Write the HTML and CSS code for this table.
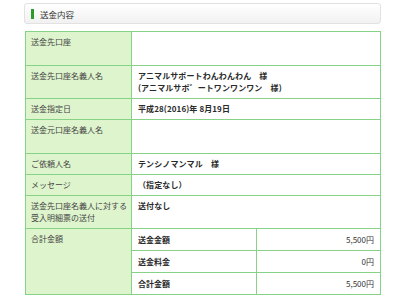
FILE: index.html
```html
<!DOCTYPE html>
<html lang="ja">
<head>
<meta charset="utf-8">
<link rel="stylesheet" href="styles.css">
</head>
<body>
<div class="page">
  <div class="heading"><span class="mark"></span><span class="heading-text">送金内容</span></div>
  <table class="detail">
    <colgroup><col class="c-label"><col class="c-value"></colgroup>
    <tr class="tall"><th>送金先口座</th><td></td></tr>
    <tr><th>送金先口座名義人名</th><td class="strong">アニマルサポートわんわんわん　様<br>(アニマルサポ゛ートワンワンワン　様)</td></tr>
    <tr><th>送金指定日</th><td class="strong">平成28(2016)年 8月19日</td></tr>
    <tr class="tall"><th>送金元口座名義人名</th><td></td></tr>
    <tr><th>ご依頼人名</th><td class="strong">テンシノマンマル　様</td></tr>
    <tr><th>メッセージ</th><td class="strong">（指定なし）</td></tr>
    <tr><th>送金先口座名義人に対する<br>受入明細票の送付</th><td class="strong">送付なし</td></tr>
    <tr><th>合計金額</th><td class="nest">
      <table class="sub">
        <tr><th>送金金額</th><td>5,500円</td></tr>
        <tr><th>送金料金</th><td>0円</td></tr>
        <tr><th>合計金額</th><td>5,500円</td></tr>
      </table>
    </td></tr>
  </table>
</div>
</body>
</html>
```

FILE: styles.css
```css
html, body {
  margin: 0;
  padding: 0;
  background: #ffffff;
}
body {
  font-family: "Noto Sans CJK JP", "Noto Sans", sans-serif;
  font-size: 8px;
  color: #333333;
}
.page {
  padding: 3px 19px 0 24px;
  width: 357px;
}
.heading {
  display: flex;
  align-items: center;
  height: 19px;
  border: 1px solid #e2e2e2;
  border-radius: 3px;
  background: linear-gradient(#ffffff, #f1f1f1);
  padding-left: 6px;
}
.mark {
  width: 3px;
  height: 10px;
  background: #2b9b2b;
  margin-right: 6px;
}
.heading-text {
  font-size: 8.5px;
  color: #333;
}
.detail {
  margin: 7px 0 0 1px;
  width: 356px;
  border-collapse: collapse;
  table-layout: fixed;
}
.c-label { width: 106px; }
.detail > tbody > tr > th,
.detail > tbody > tr > td {
  border: 1px solid #86d286;
  padding: 4px 6px;
  line-height: 12px;
  height: 12px;
  vertical-align: top;
  text-align: left;
}
.detail > tbody > tr > th {
  background: #def4cd;
  font-weight: normal;
  color: #444;
  padding-left: 5px;
  padding-right: 0;
  white-space: nowrap;
}
.detail > tbody > tr.tall > th,
.detail > tbody > tr.tall > td {
  height: 25px;
}
.detail td.strong {
  font-weight: bold;
  color: #2a2a2a;
  letter-spacing: 0.1px;
}
.detail > tbody > tr > td.nest {
  padding: 0;
  border: 1px solid #86d286;
}
.sub {
  width: 100%;
  border-collapse: collapse;
  table-layout: fixed;
}
.sub th, .sub td {
  border-top: 1px solid #86d286;
  padding: 5px 6px;
  line-height: 11px;
  height: 11px;
  background: #ffffff;
}
.sub tr:first-child th, .sub tr:first-child td {
  border-top: none;
}
.sub th {
  text-align: left;
  font-weight: bold;
  color: #2a2a2a;
  border-right: 1px solid #86d286;
}
.sub td {
  text-align: right;
  color: #333;
}
```
